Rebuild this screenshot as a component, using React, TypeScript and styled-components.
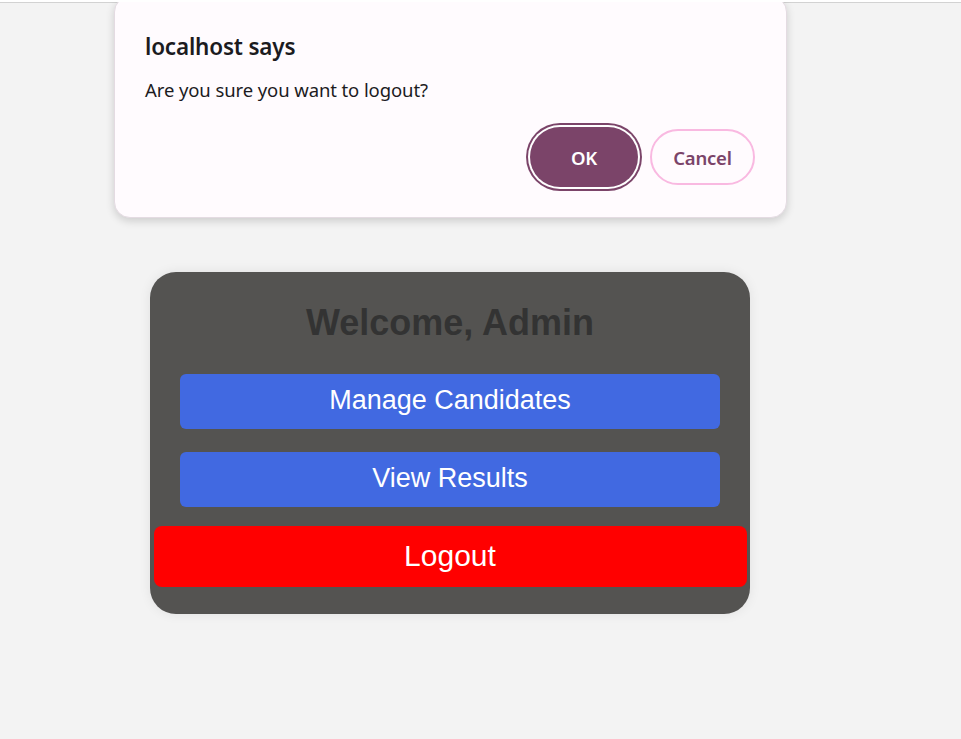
import React from "react";
import styled, { createGlobalStyle } from "styled-components";

const Global = createGlobalStyle`
  html, body { margin: 0; padding: 0; background: #f3f3f3; }
  body { font-family: "Liberation Sans", Arial, sans-serif; }
  #root { min-height: 739px; }
`;

const Page = styled.div`
  position: relative;
  min-height: 739px;
  border-top: 2px solid #ffffff;
  overflow: hidden;
`;

const ChromeLine = styled.div`
  height: 1px;
  background: #d2d2d2;
`;

const Stage = styled.div`
  padding: 269px 0 0 150px;
`;

const Card = styled.div`
  width: 600px;
  box-sizing: border-box;
  background: #545351;
  border-radius: 26px;
  padding: 28px 30px 27px;
  box-shadow: 0 0 12px rgba(0, 0, 0, 0.08);
  display: flex;
  flex-direction: column;
  align-items: center;
`;

const Title = styled.h2`
  margin: 0 0 28px;
  font-family: "Liberation Sans", Arial, sans-serif;
  font-size: 36px;
  font-weight: 700;
  color: #333333;
  line-height: 46px;
`;

const ActionButton = styled.button<{ $danger?: boolean }>`
  font-family: "Liberation Sans", Arial, sans-serif;
  border: none;
  color: #ffffff;
  cursor: pointer;
  display: flex;
  align-items: center;
  justify-content: center;
  box-sizing: border-box;
  width: ${(p) => (p.$danger ? "593px" : "540px")};
  height: ${(p) => (p.$danger ? "61px" : "55px")};
  margin-bottom: ${(p) => (p.$danger ? "0" : "23px")};
  margin-top: ${(p) => (p.$danger ? "-4px" : "0")};
  background: ${(p) => (p.$danger ? "#ff0000" : "#4169e1")};
  border-radius: ${(p) => (p.$danger ? "8px" : "6px")};
  font-size: ${(p) => (p.$danger ? "30px" : "27px")};
  padding: 0 0 2px;
`;

const Dialog = styled.div`
  position: absolute;
  left: 114px;
  top: -6px;
  width: 673px;
  height: 222px;
  box-sizing: border-box;
  background: #fffbfe;
  border: 1px solid #e4dbe2;
  border-radius: 16px;
  box-shadow: 0 3px 8px rgba(0, 0, 0, 0.16);
  padding: 36px 31px 0 30px;
  font-family: "Noto Sans", "Open Sans", sans-serif;
  color: #1c1b1f;
`;

const DialogTitle = styled.div`
  font-size: 22.5px;
  font-weight: 600;
  line-height: 28px;
  letter-spacing: -0.2px;
`;

const DialogText = styled.div`
  margin-top: 17px;
  font-size: 18.5px;
  line-height: 24px;
  letter-spacing: -0.1px;
`;

const DialogActions = styled.div`
  margin-top: 25px;
  display: flex;
  justify-content: flex-end;
  align-items: center;
  gap: 8px;
`;

const DialogButton = styled.button<{ $primary?: boolean }>`
  font-family: "Noto Sans", "Open Sans", sans-serif;
  font-size: 18.5px;
  font-weight: 600;
  letter-spacing: -0.2px;
  height: ${(p) => (p.$primary ? "60px" : "56px")};
  box-sizing: border-box;
  border-radius: 30px;
  cursor: pointer;
  padding: 0;
  width: ${(p) => (p.$primary ? "108px" : "105px")};
  background: ${(p) => (p.$primary ? "#7b4469" : "#fffbfe")};
  color: ${(p) => (p.$primary ? "#ffffff" : "#7b4469")};
  border: ${(p) => (p.$primary ? "none" : "2px solid #f9b9e1")};
  box-shadow: ${(p) =>
    p.$primary ? "0 0 0 2px #ffffff, 0 0 0 4px #7b4469" : "none"};
  margin-left: ${(p) => (p.$primary ? "0" : "4px")};
`;

export default function App() {
  return (
    <Page>
      <Global />
      <ChromeLine />
      <Stage>
        <Card>
          <Title>Welcome, Admin</Title>
          <ActionButton>Manage Candidates</ActionButton>
          <ActionButton>View Results</ActionButton>
          <ActionButton $danger>Logout</ActionButton>
        </Card>
      </Stage>
      <Dialog role="alertdialog">
        <DialogTitle>localhost says</DialogTitle>
        <DialogText>Are you sure you want to logout?</DialogText>
        <DialogActions>
          <DialogButton $primary>OK</DialogButton>
          <DialogButton>Cancel</DialogButton>
        </DialogActions>
      </Dialog>
    </Page>
  );
}
